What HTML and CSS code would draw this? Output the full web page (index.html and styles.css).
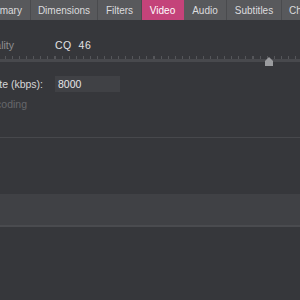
FILE: index.html
```html
<!DOCTYPE html>
<html lang="en">
<head>
    <meta charset="UTF-8">
    <title>Video</title>
    <link rel="stylesheet" href="styles.css">
</head>
<body>
    <nav class="tabs">
        <span class="tab tab-summary">Summary</span>
        <span class="tab tab-dimensions">Dimensions</span>
        <span class="tab tab-filters">Filters</span>
        <span class="tab tab-video active">Video</span>
        <span class="tab tab-audio">Audio</span>
        <span class="tab tab-subtitles">Subtitles</span>
        <span class="tab tab-chapters">Chapters</span>
    </nav>

    <section class="quality">
        <div class="row row-quality">
            <span class="label dim">Constant Quality</span>
            <span class="value">CQ&nbsp;&nbsp;46</span>
        </div>

        <div class="slider">
            <div class="ticks"></div>
            <div class="track"></div>
            <div class="thumb"></div>
        </div>

        <div class="row row-bitrate">
            <span class="label">Avg Bitrate (kbps):</span>
            <span class="field">8000</span>
        </div>

        <div class="row row-pass">
            <span class="label off">2-pass encoding</span>
        </div>
    </section>

    <div class="rule"></div>

    <div class="band"></div>
</body>
</html>
```

FILE: styles.css
```css
/* Reset */
* {
    margin: 0;
    padding: 0;
    box-sizing: border-box;
}

body {
    font-family: 'Liberation Sans', 'Inter', sans-serif;
    font-size: 10.5px;
    background-color: #36373b;
    color: #d6d6d8;
    overflow: hidden;
    height: 300px;
}

/* Tab bar */
.tabs {
    display: flex;
    height: 20px;
    background-color: #58595c;
    white-space: nowrap;
    font-size: 10px;
}

.tab {
    display: flex;
    align-items: center;
    justify-content: center;
    flex-shrink: 0;
    border-right: 1px solid #4a4b4e;
    color: #dcdcde;
}

.tab-summary {
    width: 60px;
    margin-left: -29px;
}

.tab-dimensions { width: 67px; }
.tab-filters { width: 44px; }
.tab-video { width: 42px; }
.tab-audio { width: 43px; }
.tab-subtitles { width: 55px; }
.tab-chapters { width: 60px; justify-content: flex-start; padding-left: 7px; }

.tab.active {
    background-color: #c4437a;
    color: #ffffff;
    border-right-color: #c4437a;
}

/* Quality section */
.quality {
    padding-top: 17px;
}

.row {
    display: flex;
    align-items: center;
    white-space: nowrap;
}

.label {
    width: 55px;
    display: flex;
    justify-content: flex-end;
}

.row-quality .label {
    padding-right: 41px;
}

.row-bitrate .label {
    padding-right: 12px;
}

.row-pass .label {
    padding-right: 28px;
}

.dim {
    color: #8d8e91;
}

.off {
    color: #66676b;
}

.value {
    color: #e2e2e4;
    letter-spacing: 0.5px;
}

.row-quality {
    height: 16px;
}

.slider {
    position: relative;
    height: 12px;
    margin-top: 3px;
}

.ticks {
    height: 3px;
    margin-top: 3px;
    background: repeating-linear-gradient(90deg, transparent 0, transparent 5px, #55565a 5px, #55565a 6.07px, transparent 6.07px, transparent 7.07px);
}

.track {
    height: 3px;
    background-color: #48494d;
}

.thumb {
    position: absolute;
    left: 265px;
    top: 1px;
    width: 8px;
    height: 9px;
    background-color: #9b9c9f;
    clip-path: polygon(50% 0, 100% 45%, 100% 100%, 0 100%, 0 45%);
}

.row-bitrate {
    margin-top: 8px;
}

.field {
    width: 65px;
    height: 16px;
    padding-left: 3px;
    line-height: 16px;
    background-color: #404145;
    color: #e6e6e8;
}

.row-pass {
    margin-top: 4px;
    height: 16px;
}

/* Lower panels */
.rule {
    margin-top: 25px;
    height: 1px;
    background-color: #47484c;
}

.band {
    margin-top: 56px;
    height: 33px;
    background-color: #404145;
    border-bottom: 2px solid #4a4b4f;
}
```
